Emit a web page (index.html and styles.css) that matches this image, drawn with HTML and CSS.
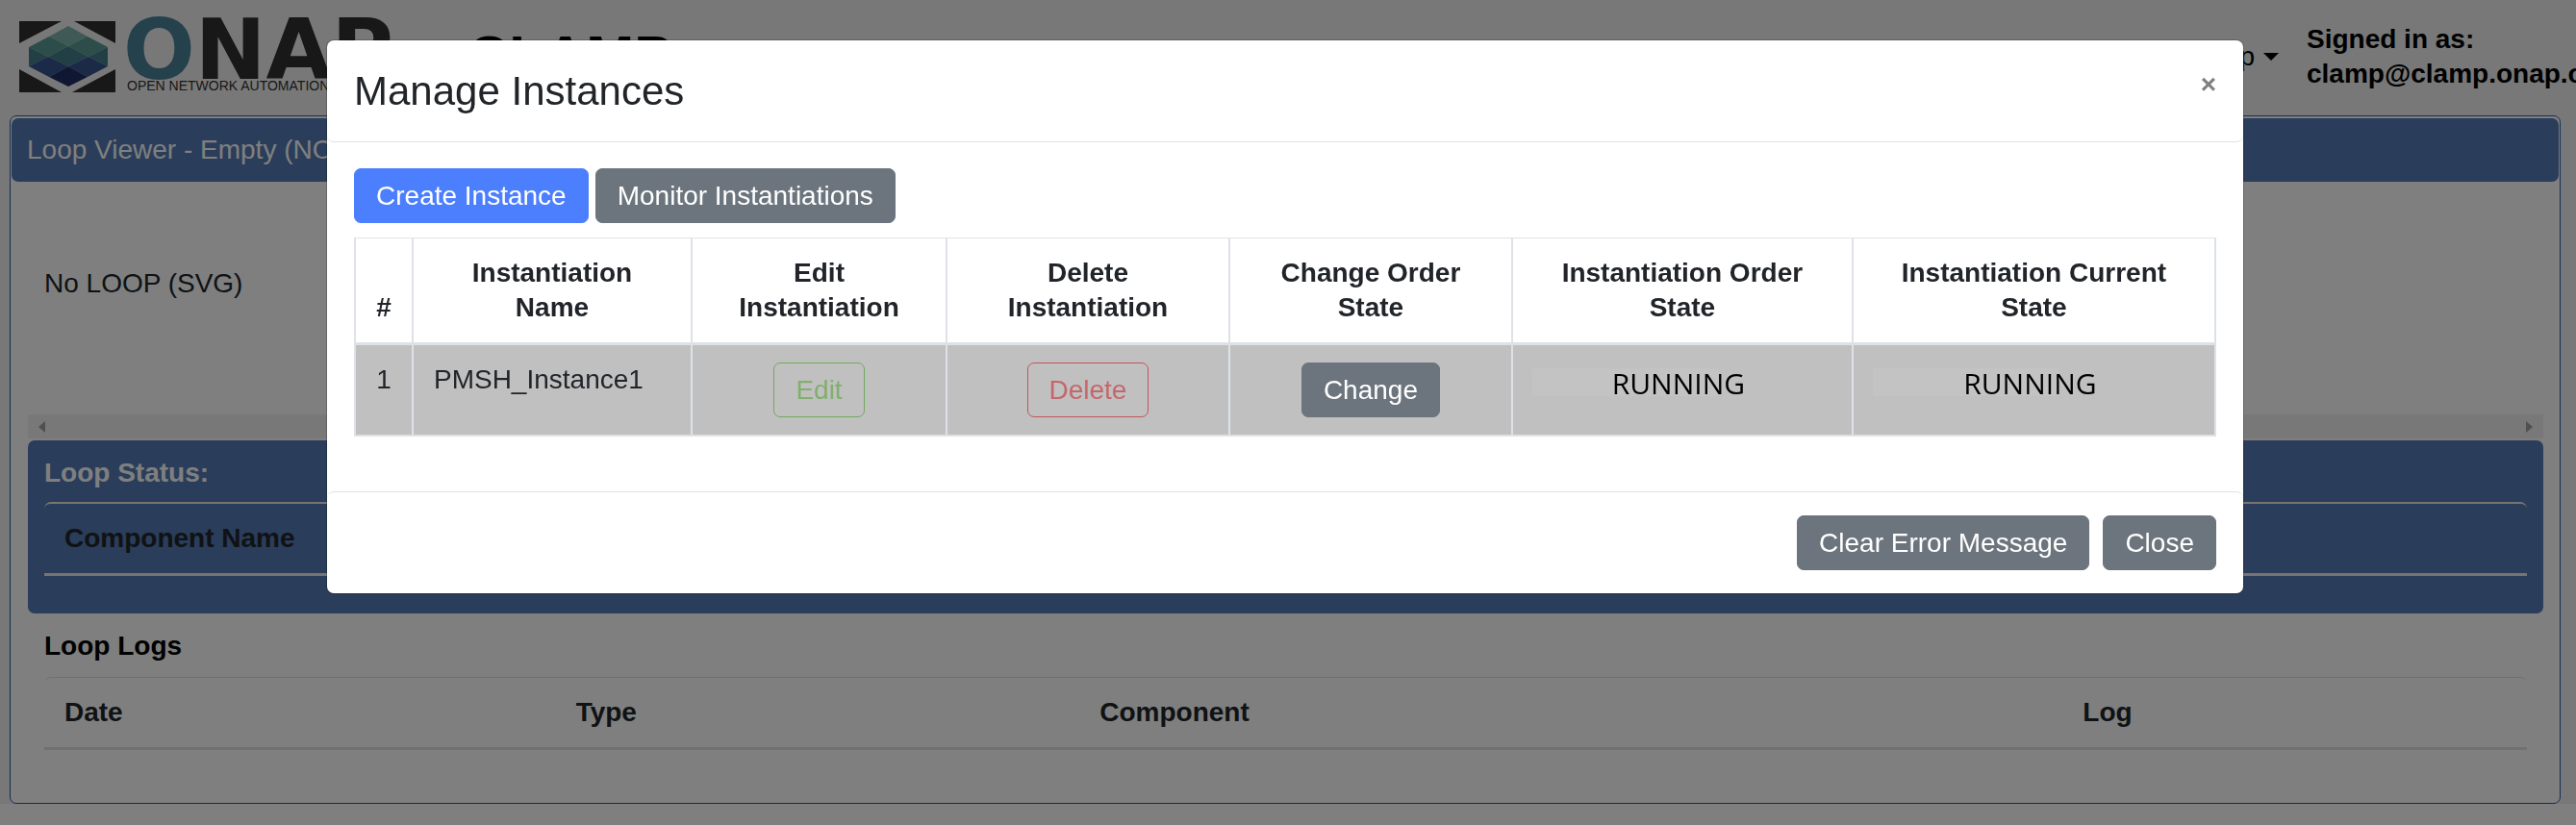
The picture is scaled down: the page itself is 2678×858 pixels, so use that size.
FILE: index.html
```html
<!DOCTYPE html>
<html lang="en">
<head>
<meta charset="utf-8">
<title>CLAMP - Manage Instances</title>
<link rel="stylesheet" href="styles.css">
</head>
<body>
<div class="page">
  <header class="navbar">
    <div class="brand">
      <svg class="brand-icon" viewBox="0 0 100 74" aria-hidden="true">
        <path fill="#303030" d="M0 0H44L0 23ZM57 0H100V23ZM0 50L44 74H0ZM100 50V74H55Z"/>
        <path fill="#7fb5ac" d="M51 5L71 16L51 26L31 16Z"/>
        <path fill="#589a94" d="M31 16L51 26L30 37L10 27ZM71 16L92 27L72 37L51 26Z"/>
        <path fill="#477f8c" d="M51 26L72 37L51 47L30 37ZM10 27L30 37L10 47ZM92 27V47L72 37Z"/>
        <path fill="#34548f" d="M30 37L51 47L31 58L10 47ZM72 37L92 47L71 58L51 47Z"/>
        <path fill="#1f2f66" d="M51 47L71 58L51 68L31 58Z"/>
      </svg>
      <div class="wordmark">
        <span class="wordmark-name"><span class="wordmark-o">O</span>NAP</span>
        <span class="wordmark-tag">OPEN NETWORK AUTOMATION PLATFORM</span>
      </div>
      <span class="app-name">CLAMP</span>
    </div>
    <div class="nav-right">
      <a class="nav-link" href="#">Help<span class="caret"></span></a>
      <div class="user">Signed in as:<br>clamp@clamp.onap.org</div>
    </div>
  </header>

  <main class="viewer">
    <h1 class="viewer-title">Loop Viewer - Empty (NO LOOP)</h1>
    <div class="viewer-body">
      <div class="loop-svg">No LOOP (SVG)</div>
      <div class="scrollbar"><span class="arrow arrow-left"></span><span class="arrow arrow-right"></span></div>
      <section class="panel panel-blue">
        <h2 class="panel-title">Loop Status:</h2>
        <table class="list">
          <thead><tr><th>Component Name</th></tr></thead>
        </table>
      </section>
      <section class="panel">
        <h2 class="panel-title">Loop Logs</h2>
        <table class="list">
          <colgroup><col class="log-date"><col class="log-type"><col class="log-component"><col></colgroup>
          <thead><tr><th>Date</th><th>Type</th><th>Component</th><th>Log</th></tr></thead>
        </table>
      </section>
    </div>
  </main>
</div>

<div class="backdrop">
  <div class="modal" role="dialog" aria-labelledby="modal-title">
    <div class="modal-header">
      <h2 class="modal-title" id="modal-title">Manage Instances</h2>
      <button class="modal-close" type="button" aria-label="Close dialog">×</button>
    </div>
    <div class="modal-body">
      <div class="toolbar">
        <button class="btn btn-primary" type="button">Create Instance</button>
        <button class="btn" type="button">Monitor Instantiations</button>
      </div>
      <table class="instances">
        <colgroup><col class="c-num"><col class="c-name"><col class="c-edit"><col class="c-delete"><col class="c-change"><col class="c-order"><col class="c-current"></colgroup>
        <thead>
          <tr>
            <th>#</th>
            <th>Instantiation<br>Name</th>
            <th>Edit<br>Instantiation</th>
            <th>Delete<br>Instantiation</th>
            <th>Change Order<br>State</th>
            <th>Instantiation Order<br>State</th>
            <th>Instantiation Current<br>State</th>
          </tr>
        </thead>
        <tbody>
          <tr>
            <td>1</td>
            <td class="name">PMSH_Instance1</td>
            <td><button class="btn btn-edit" type="button">Edit</button></td>
            <td><button class="btn btn-delete" type="button">Delete</button></td>
            <td><button class="btn" type="button">Change</button></td>
            <td class="state">RUNNING</td>
            <td class="state">RUNNING</td>
          </tr>
        </tbody>
      </table>
    </div>
    <div class="modal-footer">
      <button class="btn" type="button">Clear Error Message</button>
      <button class="btn" type="button">Close</button>
    </div>
  </div>
</div>
</body>
</html>
```

FILE: styles.css
```css
* { box-sizing: border-box; }

body {
  margin: 0;
  background: #fff;
  color: #212529;
  font-family: "Liberation Sans", Arial, sans-serif;
  font-size: 28px;
  line-height: 36px;
  overflow: hidden;
}

h1, h2 { margin: 0; font-size: 28px; line-height: 36px; }

button { font: inherit; cursor: pointer; }

.page {
  background: #f0f0f0;
  padding: 0 16px 0 10px;
}

/* Top bar */
.navbar {
  display: flex;
  justify-content: space-between;
  align-items: center;
  padding: 22px 0 24px 10px;
  white-space: nowrap;
  color: #000;
}

.brand { display: flex; align-items: center; }
.brand-icon { width: 100px; height: 74px; margin-right: 8px; }

.wordmark { display: flex; flex-direction: column; width: 358px; color: #303030; }
.wordmark-name {
  font: bold 88px/60px "DejaVu Sans", sans-serif;
}
.wordmark-o { color: #4a8299; }
.wordmark-tag { padding-left: 4px; font-size: 14px; line-height: 14px; }

.app-name { font-size: 60px; line-height: 72px; font-weight: bold; }

.nav-right { display: flex; align-items: center; gap: 29px; }
.nav-link {
  display: flex;
  align-items: center;
  gap: 9px;
  color: #000;
  text-decoration: none;
}
.caret {
  border: 8px solid transparent;
  border-top-color: #000;
  border-bottom: 0;
}
.user { width: 264px; font-weight: bold; }

/* Loop viewer */
.viewer {
  background: #fff;
  border: 1px solid #2e5cab;
  border-radius: 7px;
  padding: 2px 1px 55px;
}
.viewer-title {
  background: #547ab4;
  color: #fff;
  font-weight: normal;
  border-radius: 7px;
  padding: 15px 16px;
}
.viewer-body { padding: 0 16px 0 17px; }
.loop-svg { height: 242px; padding: 88px 17px 0; }

.scrollbar {
  display: flex;
  justify-content: space-between;
  align-items: center;
  height: 25px;
  padding: 0 11px;
  margin-bottom: 2px;
  background: #f1f1f1;
}
.arrow { border: 6px solid transparent; }
.arrow-left { border-left: 0; border-right: 7px solid #a0a0a0; }
.arrow-right { border-right: 0; border-left: 7px solid #a0a0a0; }

.panel { padding: 16px 17px 0; }
.panel-title { color: #000; padding-bottom: 14px; }
.panel-blue {
  background: #547ab4;
  border-radius: 7px;
  padding-bottom: 39px;
  --line: #f0e9e4;
}
.panel-blue .panel-title { color: #fff; padding-bottom: 12px; }

.list {
  width: 100%;
  table-layout: fixed;
  border-spacing: 0;
  border-top: 1px solid var(--line, #dee2e6);
  border-bottom: 3px solid var(--line, #dee2e6);
  border-radius: 7px 7px 0 0;
}
.panel-blue .list { border-top-width: 2px; }
.list th { padding: 18px 21px; text-align: left; }
.log-date { width: 20.6%; }
.log-type { width: 21.1%; }
.log-component { width: 39.6%; }

/* Dialog */
.backdrop {
  position: fixed;
  inset: 0;
  padding: 42px 6px 0 0;
  background: rgba(0, 0, 0, 0.5);
}
.modal {
  width: 74.55%;
  margin: 0 auto;
  background: #fff;
  border-radius: 7px;
  box-shadow: 0 0 0 1px rgba(0, 0, 0, 0.2);
}
.modal-header {
  display: flex;
  justify-content: space-between;
  align-items: flex-start;
  padding: 26px 28px 25px;
  border-bottom: 1px solid #dee2e6;
  border-radius: 7px;
}
.modal-title { font-size: 42px; line-height: 54px; font-weight: normal; }
.modal-close {
  border: 0;
  padding: 0;
  background: none;
  color: #808080;
  font-weight: bold;
  line-height: 40px;
}
.modal-body { padding: 27px 28px 57px; }
.toolbar { display: flex; gap: 7px; margin-bottom: 15px; }

.btn {
  padding: 10px 22px;
  border: 1px solid #6c757d;
  border-radius: 7px;
  background: #6c757d;
  color: #fff;
  line-height: 35px;
  white-space: nowrap;
}
.btn-primary { background: #4c7ffe; border-color: #4c7ffe; }
.btn-edit { background: none; border-color: #70aa5c; color: #80b06c; }
.btn-delete { background: none; border-color: #c4545c; color: #c5666b; }

.instances {
  width: 100%;
  table-layout: fixed;
  border-spacing: 0;
  border: solid #dee2e6;
  border-width: 1px 0 0 2px;
}
.instances th,
.instances td {
  padding: 18px 4px;
  text-align: center;
  vertical-align: top;
  border-right: 2px solid #dee2e6;
}
.instances th { vertical-align: bottom; border-bottom: 3px solid #dee2e6; }
.instances td { background: #c0c0c0; border-bottom: 2px solid #dee2e6; }
.instances .btn { display: block; margin: 0 auto; }
.instances .name { padding-left: 21px; text-align: left; }
.instances .state {
  padding-right: 12px;
  color: #000;
  font-family: "Open Sans", "Noto Sans", sans-serif;
  font-size: 30px;
  line-height: 44px;
  background: linear-gradient(#c3c3c3, #c3c3c3) 20px 24px / 194px 29px no-repeat #c0c0c0;
}
.c-num { width: 3.1%; }
.c-name { width: 15%; }
.c-edit { width: 13.7%; }
.c-delete { width: 15.2%; }
.c-change { width: 15.2%; }
.c-order { width: 18.3%; }
.c-current { width: 19.5%; }

.modal-footer {
  display: flex;
  justify-content: flex-end;
  gap: 14px;
  padding: 24px 28px;
  border-top: 1px solid #dee2e6;
  border-radius: 7px;
}
```
